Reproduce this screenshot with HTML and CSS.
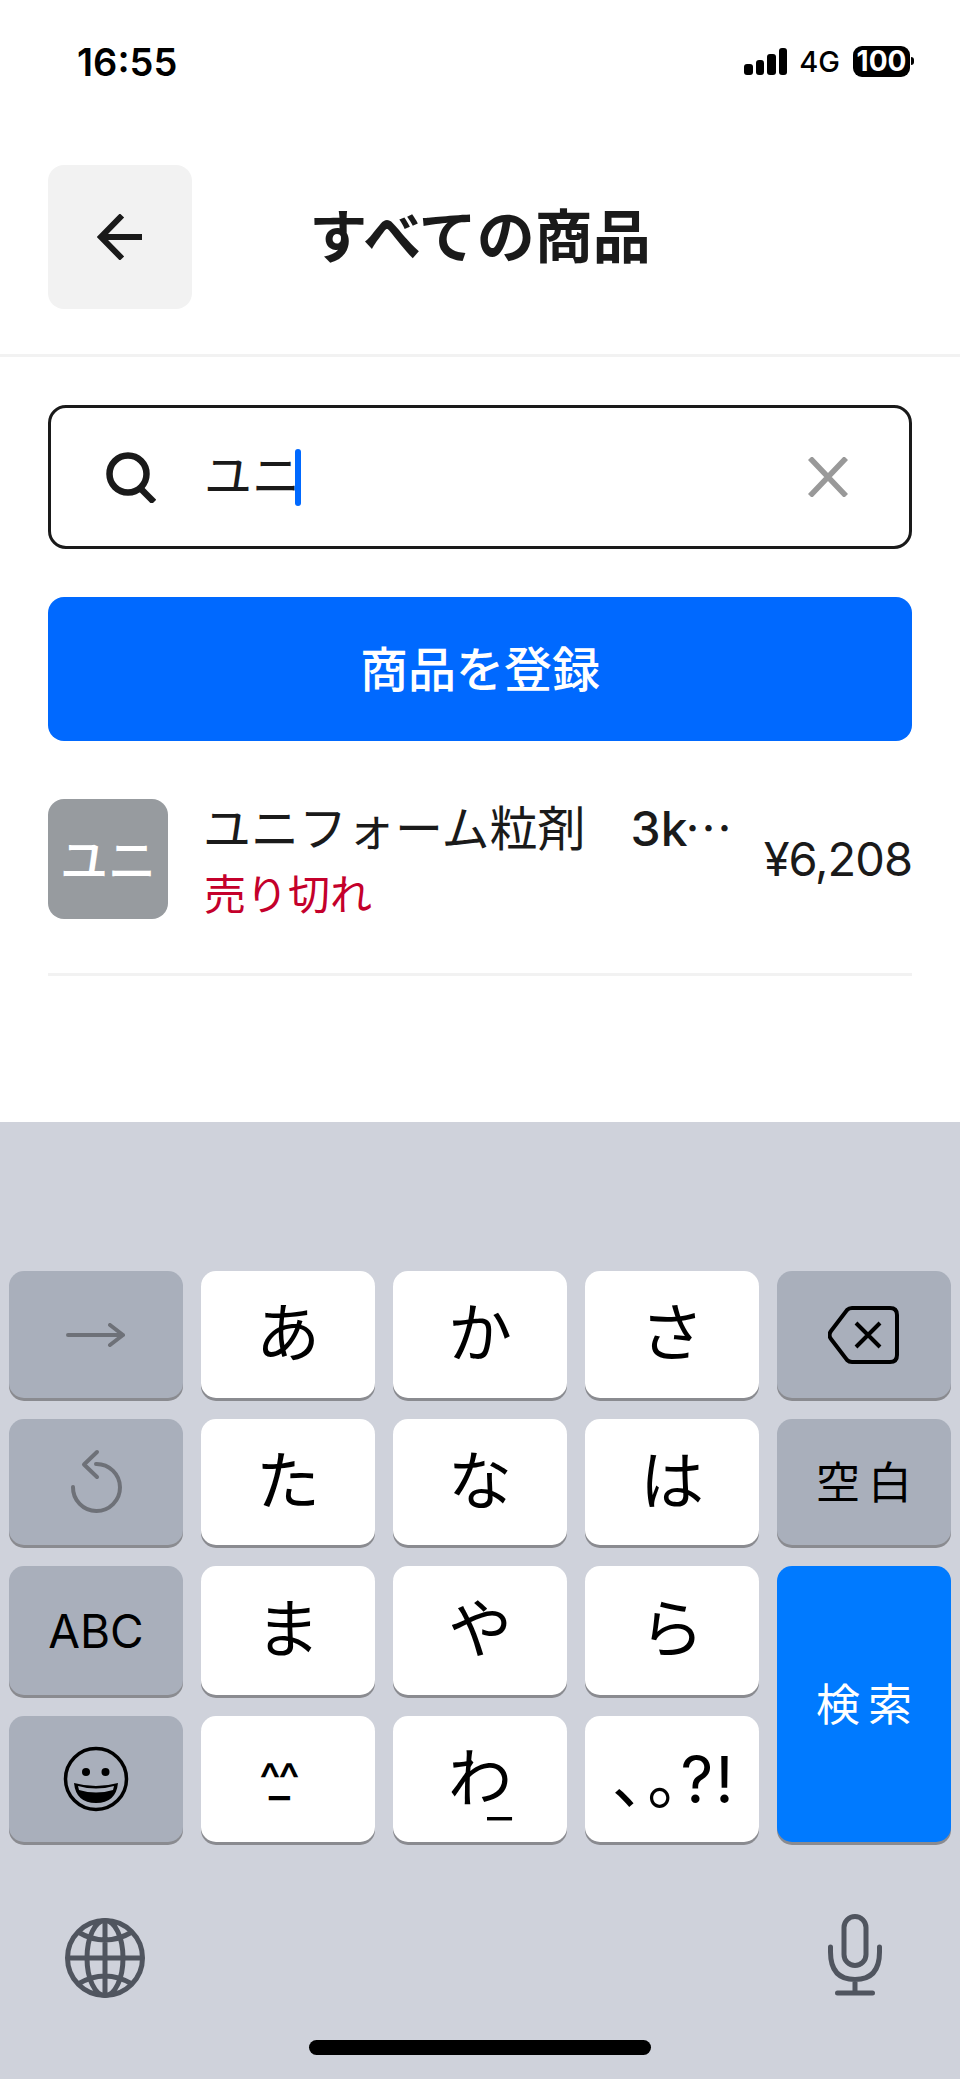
FILE: index.html
```html
<!DOCTYPE html>
<html lang="ja">
<head>
	<meta charset="UTF-8">
	<title>すべての商品</title>
	<link rel="stylesheet" href="styles.css">
</head>
<body>
	<div class="page">
		<div class="status">
			<span class="time">16:55</span>
			<div class="status-right">
				<div class="signal"><i class="b1"></i><i class="b2"></i><i class="b3"></i><i class="b4"></i></div>
				<span class="net">4G</span>
				<div class="battery"><span>100</span></div>
				<i class="nub"></i>
			</div>
		</div>

		<div class="header">
			<div class="back">
				<svg width="46" height="46" viewBox="0 0 46 46"><path d="M45 23H4M25 1.500L4 23L25 44.500" fill="none" stroke="#1a1a1a" stroke-width="6"/></svg>
			</div>
			<div class="title">すべての商品</div>
		</div>

		<div class="main">
			<div class="search">
				<svg class="search-icon" width="51" height="51" viewBox="0 0 51 51"><circle cx="23" cy="22" r="18.500" fill="none" stroke="#1a1a1a" stroke-width="6.500"/><path d="M35 36L49 50" stroke="#1a1a1a" stroke-width="6.500"/></svg>
				<span class="query">ユニ</span><i class="caret"></i>
				<svg class="clear" width="40" height="40" viewBox="0 0 40 40"><path d="M2 1L38 39M38 1L2 39" stroke="#999" stroke-width="5.500"/></svg>
			</div>
			<div class="add-btn">商品を登録</div>
			<div class="item">
				<div class="thumb">ユニ</div>
				<div class="item-text">
					<div class="name">ユニフォーム粒剤　<span class="unit">3k</span><span class="dots">…</span></div>
					<div class="sold">売り切れ</div>
				</div>
				<div class="price">¥6,208</div>
			</div>
		</div>

		<div class="keyboard">
			<div class="keys">
				<div class="key fn">
					<svg width="60" height="24" viewBox="0 0 60 24"><path d="M2 12H57M44 2L57 12L44 22" fill="none" stroke="#6e7178" stroke-width="4" stroke-linecap="round" stroke-linejoin="round"/></svg>
				</div>
				<div class="key">あ</div>
				<div class="key">か</div>
				<div class="key">さ</div>
				<div class="key fn">
					<svg width="72" height="60" viewBox="0 0 72 60"><path d="M24 3H62Q69 3 69 10V50Q69 57 62 57H24Q21 57 19 55L3 34Q0 30 3 26L19 5Q21 3 24 3Z" fill="none" stroke="#000" stroke-width="4"/><path d="M28 18L52 42M52 18L28 42" stroke="#000" stroke-width="4"/></svg>
				</div>

				<div class="key fn">
					<svg width="56" height="66" viewBox="0 0 56 66"><path d="M5 38A23.500 23.500 0 1 0 28 15" fill="none" stroke="#6e7178" stroke-width="4" stroke-linecap="round"/><path d="M29 3L16 15.500L29 28" fill="none" stroke="#6e7178" stroke-width="4" stroke-linecap="round" stroke-linejoin="round"/></svg>
				</div>
				<div class="key">た</div>
				<div class="key">な</div>
				<div class="key">は</div>
				<div class="key fn small">空白</div>

				<div class="key fn abc">ABC</div>
				<div class="key">ま</div>
				<div class="key">や</div>
				<div class="key">ら</div>
				<div class="key go small">検索</div>

				<div class="key fn emoji">
					<svg width="66" height="66" viewBox="0 0 66 66"><circle cx="33" cy="33" r="30.500" fill="none" stroke="#000" stroke-width="3.500"/><circle cx="23" cy="26" r="4" fill="#000"/><circle cx="42.500" cy="26" r="4" fill="#000"/><path d="M11 37Q33 43 55 37Q53 57 33 57Q13 57 11 37Z" fill="#000"/><path d="M15 40Q33 45 51 40L50 44Q33 49 16 44Z" fill="#a9afbb"/></svg>
				</div>
				<div class="key face">^_^</div>
				<div class="key">わ<span class="wa">_</span></div>
				<div class="key punct">、。?!</div>
			</div>
			<div class="kb-bottom">
				<svg class="globe" width="84" height="84" viewBox="0 0 84 84" fill="none" stroke="#50555f" stroke-width="5"><circle cx="42" cy="42" r="37.500"/><ellipse cx="42" cy="42" rx="18" ry="37.500"/><path d="M42 4V80M4 42H80M15 16Q42 32 69 16M15 68Q42 52 69 68"/></svg>
				<svg width="60" height="84" viewBox="0 0 60 84" fill="none" stroke="#50555f" stroke-width="5" stroke-linecap="round"><rect x="19" y="4.500" width="22" height="49" rx="11"/><path d="M5.500 35V40Q5.500 67.500 30 67.500Q54.500 67.500 54.500 40V35M30 67.500V81M12.500 81H47.500"/></svg>
			</div>
			<div class="home"></div>
		</div>
	</div>
</body>
</html>
```
FILE: styles.css
```css
* {
	margin: 0;
	padding: 0;
	box-sizing: border-box;
}
body {
	background: #fff;
	font-family: Inter, "Noto Sans CJK JP", sans-serif;
	color: #1a1a1a;
}
.page {
	width: 960px;
	height: 2079px;
	display: flex;
	flex-direction: column;
	overflow: hidden;
}

/* status bar */
.status {
	height: 90px;
	padding: 40px 46px 0 77px;
	display: flex;
	justify-content: space-between;
	align-items: flex-start;
	color: #000;
}
.time {
	font-size: 38px;
	font-weight: 600;
	line-height: 44px;
}
.status-right {
	display: flex;
	align-items: center;
	height: 42px;
}
.signal {
	display: flex;
	align-items: flex-end;
	gap: 3px;
	height: 27px;
	margin-right: 12px;
}
.signal i {
	width: 8.500px;
	background: #000;
	border-radius: 3px;
}
.signal .b1 { height: 11px; }
.signal .b2 { height: 15px; }
.signal .b3 { height: 21px; }
.signal .b4 { height: 27px; }
.net {
	font-size: 29px;
	font-weight: 500;
	margin-right: 13px;
}
.battery {
	width: 57px;
	height: 31px;
	background: #000;
	border-radius: 9px;
	color: #fff;
	font-size: 28px;
	font-weight: 700;
	display: flex;
	align-items: center;
	justify-content: center;
}
.nub {
	width: 3px;
	height: 8px;
	margin-left: 1px;
	background: #000;
	border-radius: 0 3px 3px 0;
}

/* header */
.header {
	height: 267px;
	padding: 75px 48px 0;
	display: grid;
	grid-template-columns: 144px 1fr 144px;
	align-items: start;
	border-bottom: 3px solid #f2f2f2;
}
.back {
	height: 144px;
	background: #f2f2f2;
	border-radius: 16px;
	display: flex;
	align-items: center;
	justify-content: center;
}
.title {
	height: 144px;
	line-height: 144px;
	text-align: center;
	font-size: 58px;
	font-weight: 700;
}

/* search + list */
.main {
	flex: 1;
	padding: 48px 48px 0;
}
.search {
	height: 144px;
	border: 3px solid #1a1a1a;
	border-radius: 18px;
	padding: 0 61px 0 54px;
	display: flex;
	align-items: center;
}
.search-icon {
	margin-right: 48px;
}
.query {
	font-size: 48px;
	line-height: 60px;
	margin-top: -2px;
}
.caret {
	width: 6px;
	height: 57px;
	margin-left: -5px;
	background: #0069ff;
	border-radius: 3px;
}
.clear {
	margin-left: auto;
}
.add-btn {
	height: 144px;
	margin-top: 48px;
	padding-bottom: 6px;
	background: #0069ff;
	border-radius: 16px;
	color: #fff;
	font-size: 48px;
	font-weight: 500;
	display: flex;
	align-items: center;
	justify-content: center;
}
.item {
	margin-top: 57px;
	padding-bottom: 54px;
	border-bottom: 3px solid #f2f2f2;
	display: flex;
	align-items: center;
}
.thumb {
	width: 120px;
	height: 120px;
	padding-bottom: 4px;
	background: #979b9f;
	border-radius: 16px;
	color: #fff;
	font-size: 48px;
	font-weight: 500;
	display: flex;
	align-items: center;
	justify-content: center;
	flex-shrink: 0;
}
.item-text {
	margin-left: 36px;
	flex: 1;
	min-width: 0;
	align-self: flex-start;
}
.name {
	margin-left: -1px;
	font-size: 48px;
	line-height: 54px;
	white-space: nowrap;
}
.unit {
	font-weight: 500;
	margin-left: -3px;
}
.dots {
	font-family: "Noto Sans CJK JP", sans-serif;
	margin-left: -3px;
}
.sold {
	font-size: 42px;
	line-height: 48px;
	margin-top: 15px;
	color: #c4002b;
}
.price {
	font-size: 47px;
	line-height: 60px;
	letter-spacing: -1px;
	white-space: nowrap;
}

/* keyboard */
.keyboard {
	height: 957px;
	background: #cfd2db;
	padding: 149px 9px 0;
	display: flex;
	flex-direction: column;
	color: #000;
}
.keys {
	display: grid;
	grid-template-columns: repeat(5, 174px);
	grid-template-rows: 127px 126px 129px 126px;
	gap: 21px 18px;
}
.key {
	position: relative;
	background: #fff;
	border-radius: 15px;
	box-shadow: 0 3px 0 #8a8b90;
	font-size: 64px;
	padding-bottom: 13px;
	display: flex;
	align-items: center;
	justify-content: center;
}
.fn {
	background: #a9afbb;
	padding-bottom: 0;
}
.small {
	font-size: 44px;
	letter-spacing: 8px;
	padding: 0 0 5px 8px;
}
.abc {
	font-size: 46px;
}
.go {
	grid-column: 5;
	grid-row: 3 / span 2;
	background: #007aff;
	color: #fff;
}
.emoji {
	grid-column: 1;
	grid-row: 4;
}
.face {
	font-size: 46px;
	font-weight: 500;
	letter-spacing: -9px;
	padding: 0 26px 0 0;
}
.wa {
	position: absolute;
	left: 94px;
	top: 47px;
	font-size: 56px;
	font-weight: 300;
}
.punct {
	font-size: 64px;
	font-feature-settings: "palt";
	letter-spacing: 2px;
	padding: 0 0 8px 4px;
}
.kb-bottom {
	display: flex;
	justify-content: space-between;
	align-items: flex-start;
	height: 88px;
	margin-top: 70px;
	padding: 0 66px 0 54px;
}
.globe {
	margin-top: 4px;
}
.home {
	width: 342px;
	height: 15px;
	margin: 40px auto 0;
	background: #000;
	border-radius: 8px;
}
```
